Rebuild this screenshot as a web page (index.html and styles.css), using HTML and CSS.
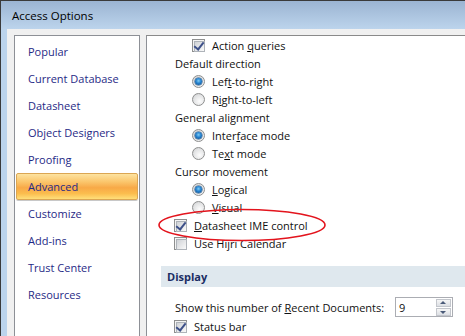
FILE: index.html
```html
<!Doctype html>
<html>

<head>
    <link rel="stylesheet" href="styles.css">
</head>

<body>
    <div class="window">
        <div class="titleBar">Access Options</div>
        <div class="frame">
            <div class="client">
                <ul class="nav">
                    <li>Popular</li>
                    <li>Current Database</li>
                    <li>Datasheet</li>
                    <li>Object Designers</li>
                    <li>Proofing</li>
                    <li class="active">Advanced</li>
                    <li>Customize</li>
                    <li>Add-ins</li>
                    <li>Trust Center</li>
                    <li>Resources</li>
                </ul>
                <div class="panel">
                    <div class="row sub"><span class="check on"></span><span>Action <u>q</u>ueries</span></div>
                    <div class="row label">Default direction</div>
                    <div class="row sub"><span class="radio on"></span><span>Lef<u>t</u>-to-right</span></div>
                    <div class="row sub"><span class="radio"></span><span>R<u>i</u>ght-to-left</span></div>
                    <div class="row label">General alignment</div>
                    <div class="row sub"><span class="radio on"></span><span>Inter<u>f</u>ace mode</span></div>
                    <div class="row sub"><span class="radio"></span><span>Te<u>x</u>t mode</span></div>
                    <div class="row label">Cursor movement</div>
                    <div class="row sub"><span class="radio on"></span><span><u>L</u>ogical</span></div>
                    <div class="row sub"><span class="radio"></span><span><u>V</u>isual</span></div>
                    <div class="row"><span class="check on"></span><span><u>D</u>atasheet IME control</span></div>
                    <div class="row"><span class="check"></span><span>Use Hi<u>j</u>ri Calendar</span></div>

                    <div class="section">Display</div>
                    <div class="row field">
                        <span class="caption">Show this number of <u>R</u>ecent Documents:</span>
                        <div class="spin">
                            <span class="value">9</span>
                            <div class="spinButtons">
                                <span class="spinUp"></span>
                                <span class="spinDown"></span>
                            </div>
                        </div>
                    </div>
                    <div class="row"><span class="check on"></span><span>Status bar</span></div>
                </div>
            </div>
        </div>
    </div>
    <!-- red callout drawn over the dialog -->
    <svg class="callout" width="172" height="36" viewBox="0 0 172 36">
        <ellipse cx="85" cy="17" rx="83" ry="15.5" fill="none" stroke="#e3141d" stroke-width="1.6" />
    </svg>
</body>

</html>
```

FILE: styles.css
```css
* {
    font-family: "Open Sans", "Noto Sans", sans-serif;
    box-sizing: border-box;
}

body {
    margin: 0;
    width: 465px;
    height: 336px;
    overflow: hidden;
    position: relative;
}

.window {
    width: 465px;
    height: 336px;
    overflow: hidden;
    border-top: 1px solid #3a3a3a;
    border-left: 1px solid #3a3a3a;
    background: #bcd4ec;
}

.titleBar {
    height: 28px;
    line-height: 30px;
    padding-left: 11px;
    font-size: 11.5px;
    color: #000;
    background: linear-gradient(#9bb4d2, #bcd4ec);
}

.frame {
    border-left: 6px solid #bcd4ec;
    height: 400px;
}

.client {
    display: flex;
    gap: 6px;
    height: 100%;
    padding: 6px 0 0 7px;
    margin-right: -6px;
    background: #f0f0f0;
}

.nav {
    width: 126px;
    flex-shrink: 0;
    margin: 0;
    padding: 2px 0 0 0;
    list-style: none;
    background: white;
    border: 1px solid #8d9096;
}

.nav li {
    height: 27px;
    line-height: 27px;
    margin: 0 1px;
    padding-left: 12px;
    font-size: 11px;
    color: #1f2a86;
}

.nav li.active {
    padding-left: 11px;
    border: 1px solid #dba653;
    border-radius: 2px;
    line-height: 25px;
    background: linear-gradient(#fde3a0 0%, #fbc76e 30%, #f8a947 55%, #fbbd4e 78%, #ffdf7a 100%);
    box-shadow: 0 1px 0 #c8c8c8;
}

.panel {
    flex: 1;
    background: white;
    border-top: 1px solid #8a8a8a;
    border-left: 1px solid #8d9096;
    font-size: 11px;
    color: #111;
}

.row {
    display: flex;
    align-items: center;
    height: 18px;
    padding-left: 27px;
}

.row.sub {
    padding-left: 45px;
}

.row.label {
    padding-left: 28px;
}

.check,
.radio {
    width: 13px;
    height: 13px;
    margin-right: 7px;
    flex-shrink: 0;
    position: relative;
    border: 1px solid #8e8f8f;
    background: #f4f4f4;
}

.check::before {
    content: "";
    position: absolute;
    left: 1px;
    top: 1px;
    width: 9px;
    height: 9px;
    border: 1px solid #aeb3b9;
    background: linear-gradient(135deg, #cfd2d6, #fafafa);
}

.check.on::after {
    content: "";
    position: absolute;
    left: 3px;
    top: 0px;
    width: 4px;
    height: 8px;
    border: solid #3d5089;
    border-width: 0 2px 2px 0;
    transform: rotate(38deg);
}

.radio {
    border-radius: 50%;
    background: radial-gradient(circle at 60% 65%, #fdfdfd 0%, #e2e3e4 60%, #c9cacc 100%);
}

.radio.on::after {
    content: "";
    position: absolute;
    left: 2px;
    top: 2px;
    width: 7px;
    height: 7px;
    border-radius: 50%;
    background: radial-gradient(circle at 50% 40%, #7fcdf4 0%, #2481cf 45%, #0e4780 100%);
    box-shadow: 0 0 0 0.5px #1b4f80;
}

.section {
    height: 21px;
    line-height: 21px;
    margin: 14px 0 0 14px;
    padding-left: 6px;
    font-size: 11px;
    font-weight: bold;
    color: #1a2d63;
    background: #dfe8ee;
}

.row.field {
    height: 20px;
    margin-top: 10px;
    padding-left: 28px;
}

.caption {
    width: 220px;
}

.spin {
    width: 58px;
    height: 20px;
    display: flex;
    align-items: center;
    justify-content: space-between;
    border: 1px solid #abadb3;
    padding: 0 1px 0 3px;
}

.spinButtons {
    display: flex;
    flex-direction: column;
    gap: 1px;
}

.spinUp,
.spinDown {
    width: 15px;
    height: 8px;
    position: relative;
    border: 1px solid #c3c6cc;
    background: linear-gradient(#f6f6f6, #dcdfe4);
}

.spinUp::after,
.spinDown::after {
    content: "";
    position: absolute;
    left: 3px;
    border-left: 3.5px solid transparent;
    border-right: 3.5px solid transparent;
}

.spinUp::after {
    top: 1px;
    border-bottom: 3px solid #4a5a78;
}

.spinDown::after {
    top: 2px;
    border-top: 3px solid #4a5a78;
}

.callout {
    position: absolute;
    left: 157px;
    top: 208px;
}
```
